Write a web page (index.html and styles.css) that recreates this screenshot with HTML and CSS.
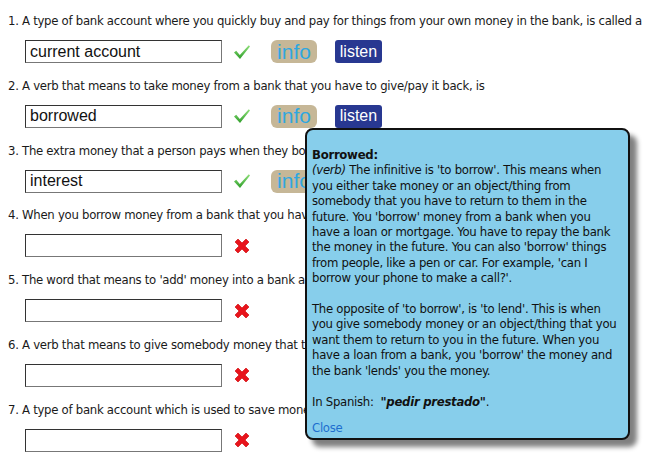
FILE: index.html
```html
<!DOCTYPE html>
<html>
<head>
<meta charset="utf-8">
<link rel="stylesheet" href="styles.css">
</head>
<body>
<div class="quiz">
  <div class="item">
    <p class="q">1. A type of bank account where you quickly buy and pay for things from your own money in the bank, is called a</p>
    <div class="row">
      <input class="answer" type="text" value="current account">
      <svg class="mark" width="18" height="16" viewBox="0 0 18 16"><defs><linearGradient id="g1" x1="0" y1="0" x2="0" y2="1"><stop offset="0" stop-color="#8fe07a"/><stop offset="1" stop-color="#2f9e2a"/></linearGradient></defs><path d="M1 8.5 L3.2 6.8 L6.8 11 L15.8 1.2 L17 2.4 L7 15 Z" fill="url(#g1)"/></svg>
      <span class="btn info">info</span>
      <span class="btn listen">listen</span>
    </div>
  </div>
  <div class="item">
    <p class="q">2. A verb that means to take money from a bank that you have to give/pay it back, is</p>
    <div class="row">
      <input class="answer" type="text" value="borrowed">
      <svg class="mark" width="18" height="16" viewBox="0 0 18 16"><path d="M1 8.5 L3.2 6.8 L6.8 11 L15.8 1.2 L17 2.4 L7 15 Z" fill="url(#g1)"/></svg>
      <span class="btn info">info</span>
      <span class="btn listen">listen</span>
    </div>
  </div>
  <div class="item">
    <p class="q">3. The extra money that a person pays when they borrow money from a bank, is called</p>
    <div class="row">
      <input class="answer" type="text" value="interest">
      <svg class="mark" width="18" height="16" viewBox="0 0 18 16"><path d="M1 8.5 L3.2 6.8 L6.8 11 L15.8 1.2 L17 2.4 L7 15 Z" fill="url(#g1)"/></svg>
      <span class="btn info">info</span>
      <span class="btn listen">listen</span>
    </div>
  </div>
  <div class="item">
    <p class="q">4. When you borrow money from a bank that you have to pay back over many years, it is a</p>
    <div class="row">
      <input class="answer" type="text" value="">
      <svg class="mark" width="18" height="18" viewBox="0 0 18 18"><path d="M2 5 L5 2 L9 6 L13 2 L16 5 L12 9 L16 13 L13 16 L9 12 L5 16 L2 13 L6 9 Z" fill="#e8141c" stroke="#c00" stroke-width="0.6"/></svg>
    </div>
  </div>
  <div class="item">
    <p class="q">5. The word that means to 'add' money into a bank account, is</p>
    <div class="row">
      <input class="answer" type="text" value="">
      <svg class="mark" width="18" height="18" viewBox="0 0 18 18"><path d="M2 5 L5 2 L9 6 L13 2 L16 5 L12 9 L16 13 L13 16 L9 12 L5 16 L2 13 L6 9 Z" fill="#e8141c" stroke="#c00" stroke-width="0.6"/></svg>
    </div>
  </div>
  <div class="item">
    <p class="q">6. A verb that means to give somebody money that they have to pay back, is</p>
    <div class="row">
      <input class="answer" type="text" value="">
      <svg class="mark" width="18" height="18" viewBox="0 0 18 18"><path d="M2 5 L5 2 L9 6 L13 2 L16 5 L12 9 L16 13 L13 16 L9 12 L5 16 L2 13 L6 9 Z" fill="#e8141c" stroke="#c00" stroke-width="0.6"/></svg>
    </div>
  </div>
  <div class="item">
    <p class="q">7. A type of bank account which is used to save money, is called a</p>
    <div class="row">
      <input class="answer" type="text" value="">
      <svg class="mark" width="18" height="18" viewBox="0 0 18 18"><path d="M2 5 L5 2 L9 6 L13 2 L16 5 L12 9 L16 13 L13 16 L9 12 L5 16 L2 13 L6 9 Z" fill="#e8141c" stroke="#c00" stroke-width="0.6"/></svg>
    </div>
  </div>
</div>

<div class="popup">
  <p class="pop-text"><b>Borrowed:</b><br><i>(verb)</i> The infinitive is 'to borrow'. This means when you either take money or an object/thing from somebody that you have to return to them in the future. You 'borrow' money from a bank when you have a loan or mortgage. You have to repay the bank the money in the future. You can also 'borrow' things from people, like a pen or car. For example, 'can I borrow your phone to make a call?'.<br><br>The opposite of 'to borrow', is 'to lend'. This is when you give somebody money or an object/thing that you want them to return to you in the future. When you have a loan from a bank, you 'borrow' the money and the bank 'lends' you the money.<br><br>In Spanish: &nbsp;<b><i>"pedir prestado"</i></b>.</p>
  <a class="close" href="#">Close</a>
</div>
</body>
</html>
```
FILE: styles.css
```css
html, body {
  margin: 0;
  padding: 0;
  background: #fff;
}
body {
  padding: 13px 8px 0 8px;
  font-family: "DejaVu Sans Condensed", "DejaVu Sans", sans-serif;
  font-size: 13px;
  letter-spacing: -0.28px;
  color: #1a1a1a;
  overflow: hidden;
}
.quiz {
  display: flex;
  flex-direction: column;
}
.item {
  display: flex;
  flex-direction: column;
  gap: 11px;
  padding-bottom: 14.8px;
}
.q {
  margin: 0;
  line-height: 16px;
  white-space: nowrap;
}
.row {
  display: flex;
  align-items: center;
  padding-left: 17px;
  height: 23px;
  letter-spacing: 0;
}
.answer {
  box-sizing: border-box;
  width: 197px;
  height: 23px;
  margin: 0;
  padding: 0 4px;
  border: 1px solid #333;
  border-right-color: #777;
  border-bottom-color: #777;
  font-family: "Liberation Sans", Arial, sans-serif;
  font-size: 16px;
  color: #111;
  background: #fff;
}
.mark {
  margin-left: 11px;
}
.btn {
  box-sizing: border-box;
  height: 23px;
  display: flex;
  align-items: center;
  justify-content: center;
  font-family: "Liberation Sans", Arial, sans-serif;
}
.info {
  width: 46px;
  margin-left: 20px;
  background: #c6b797;
  color: #2ea7e0;
  border-radius: 6px;
  font-size: 21px;
}
.listen {
  width: 47px;
  margin-left: 18px;
  background: #283891;
  color: #fff;
  border-radius: 3px;
  font-size: 16px;
}
.popup {
  position: absolute;
  left: 305px;
  top: 128px;
  width: 325px;
  height: 312px;
  box-sizing: border-box;
  background: #87ceeb;
  border: 2px solid #111;
  border-radius: 8px;
  box-shadow: 7px 7px 5px #808080;
  padding: 17px 8px 0 5px;
  font-family: "DejaVu Sans Condensed", "DejaVu Sans", sans-serif;
  font-size: 13px;
  letter-spacing: -0.28px;
  line-height: 15.4px;
  color: #111;
}
.pop-text {
  margin: 0;
}
.close {
  display: block;
  margin-top: 11px;
  color: #1e6fcf;
  text-decoration: none;
  line-height: 15.4px;
}
```
